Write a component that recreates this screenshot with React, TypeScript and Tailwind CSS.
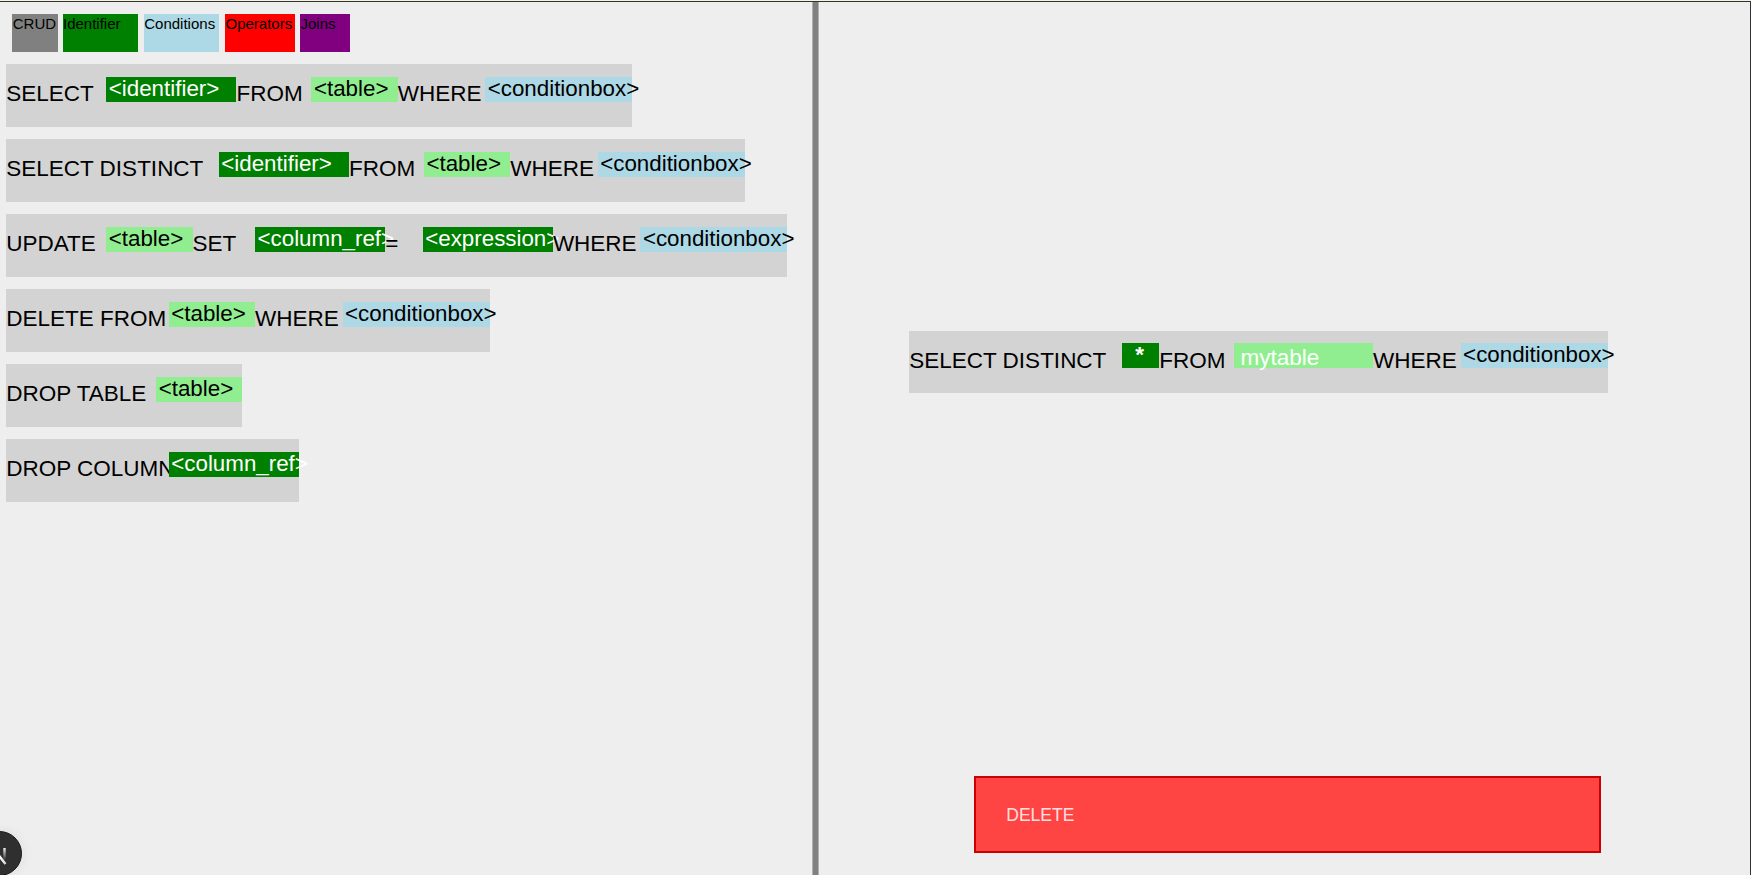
import React from "react";

type Part = { text: string; kind?: "column" | "table" | "condition"; width: string };

const cond: Part = { text: "<conditionbox>", kind: "condition", width: "w-[147px]" };
const table: Part = { text: "<table>", kind: "table", width: "w-[86.25px]" };
const from: Part = { text: "FROM", width: "w-[75px]" };
const where: Part = { text: "WHERE", width: "w-[87.5px]" };
const column = (text: string): Part => ({ text, kind: "column", width: "w-[130.2px]" });

const statements: Part[][] = [
  [{ text: "SELECT", width: "w-[100px]" }, column("<identifier>"), from, table, where, cond],
  [{ text: "SELECT DISTINCT", width: "w-[212.5px]" }, column("<identifier>"), from, table, where, cond],
  [
    { text: "UPDATE", width: "w-[100px]" },
    table,
    { text: "SET", width: "w-[62.5px]" },
    column("<column_ref>"),
    { text: "=", width: "w-[37.5px]" },
    column("<expression>"),
    where,
    cond,
  ],
  [{ text: "DELETE FROM", width: "w-[162.5px]" }, table, where, cond],
  [{ text: "DROP TABLE", width: "w-[149.9px]" }, table],
  [{ text: "DROP COLUMN", width: "w-[162.5px]" }, column("<column_ref>")],
];

const colors = {
  column: "bg-[#008000] text-white",
  table: "bg-[#90ee90] text-black",
  condition: "bg-[#add8e6] text-black",
};

const categories = [
  { name: "CRUD", style: "w-[45.25px] mr-[5px] bg-[#808080]" },
  { name: "Identifier", style: "w-[75px] mr-[6.25px] bg-[#008000]" },
  { name: "Conditions", style: "w-[75px] mr-[6.25px] bg-[#add8e6]" },
  { name: "Operators", style: "w-[70px] mr-[5px] bg-[#ff0000]" },
  { name: "Joins", style: "w-[50px] bg-[#800080]" },
];

function Piece({ part }: { part: Part }) {
  if (!part.kind) {
    return <div className={`${part.width} shrink-0 pt-[17px] leading-[25px]`}>{part.text}</div>;
  }
  return (
    <div
      className={`${part.width} ${colors[part.kind]} mt-[12.5px] h-[25px] shrink-0 pl-[2.5px] text-[22.35px] leading-[23px]`}
    >
      {part.text}
    </div>
  );
}

function Statement({ parts }: { parts: Part[] }) {
  return (
    <div className="flex h-[62.5px] w-max items-start bg-[#d3d3d3] text-[22.5px] whitespace-nowrap">
      {parts.map((part, i) => (
        <Piece key={i} part={part} />
      ))}
    </div>
  );
}

export default function App() {
  return (
    <div className="relative flex h-[875px] w-[1751px] flex-col overflow-hidden bg-[#eeeeee] font-['Liberation_Sans',Arial,sans-serif] text-black">
      <div className="h-px shrink-0 bg-[#f4f4e6]" />
      <div className="flex min-h-0 grow border-t border-r border-t-[#33332a] border-r-[#333333]">
        <section className="w-[812.25px] shrink-0 pt-[12.25px] pl-[6.25px]">
          <div className="flex pl-[6px] text-[15px] leading-[17px]">
            {categories.map((c) => (
              <div key={c.name} className={`h-[37.5px] shrink-0 pt-px pl-[0.5px] ${c.style}`}>
                {c.name}
              </div>
            ))}
          </div>
          <div className="mt-[12.5px] flex flex-col gap-[12.5px]">
            {statements.map((parts, i) => (
              <Statement key={i} parts={parts} />
            ))}
          </div>
        </section>
        <div className="w-[7px] shrink-0 border-x border-[#b0b0b0] bg-[#808080]" />
        <section className="flex min-w-0 grow flex-col">
          <div className="mt-[328.75px] ml-[90px] flex h-[62.5px] w-max items-start bg-[#d3d3d3] text-[22.5px] whitespace-nowrap">
            <Piece part={{ text: "SELECT DISTINCT", width: "w-[212.5px]" }} />
            <div className="mt-[12.5px] h-[25px] w-[37.6px] bg-[#008000] pl-[13.5px] leading-[24px] font-bold text-white">*</div>
            <Piece part={from} />
            <div className="mt-[12.5px] h-[25px] w-[138.75px] bg-[#90ee90] pl-[6.25px] leading-[29px] text-white">mytable</div>
            <Piece part={where} />
            <Piece part={cond} />
          </div>
          <div className="mt-auto mb-[22px] ml-[155px] flex h-[77px] w-[627px] items-center border-2 border-[#cc0000] bg-[#ff4444] pt-[2px] pl-[30px] text-[17.5px] text-[#ffe0e0]">
            DELETE
          </div>
        </section>
      </div>
      <div className="absolute bottom-[-1px] left-[-23px] flex h-[45px] w-[45px] items-center justify-center rounded-full border border-[#1a1a1a] bg-[#2f2f2f] shadow-[0_0_12px_rgba(0,0,0,0.08)]">
        <svg width="45" height="45" viewBox="0 0 45 45" fill="none" className="shrink-0">
          <path d="M16 33V17L28.5 33" stroke="url(#diag)" strokeWidth="2.4" />
          <path d="M27.5 17V29" stroke="url(#stem)" strokeWidth="2.4" />
          <defs>
            <linearGradient id="diag" x1="16" y1="16" x2="29" y2="33" gradientUnits="userSpaceOnUse">
              <stop offset="0.6" stopColor="white" />
              <stop offset="1" stopColor="white" stopOpacity="0.8" />
            </linearGradient>
            <linearGradient id="stem" x1="27" y1="16" x2="27" y2="29" gradientUnits="userSpaceOnUse">
              <stop stopColor="white" />
              <stop offset="1" stopColor="white" stopOpacity="0" />
            </linearGradient>
          </defs>
        </svg>
      </div>
    </div>
  );
}
